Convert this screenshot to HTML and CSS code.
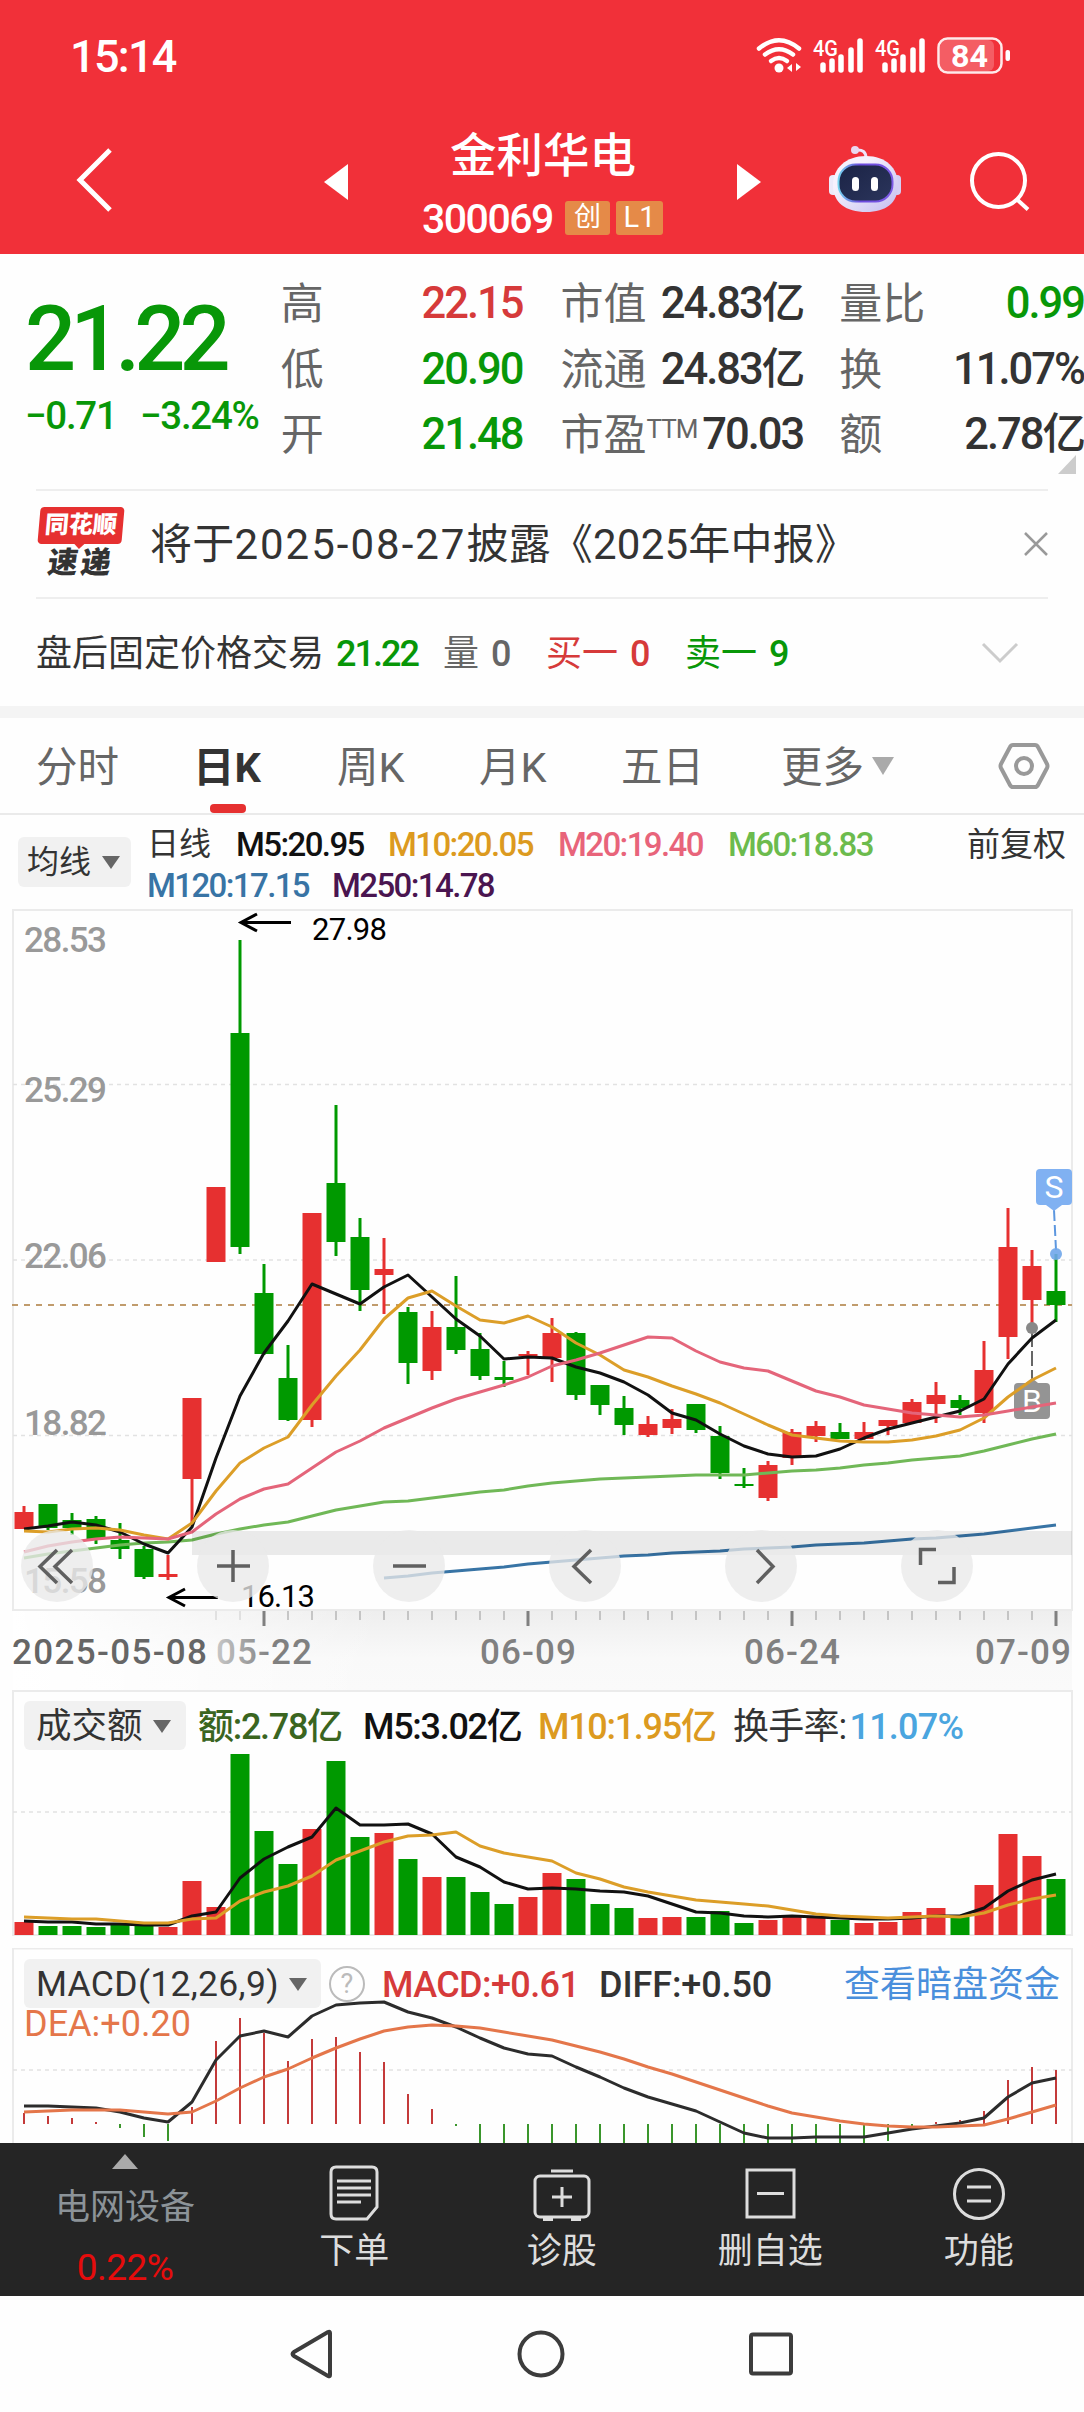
FILE: index.html
```html
<!DOCTYPE html>
<html lang="zh-CN">
<head>
  <meta charset="UTF-8">
  <meta name="viewport" content="width=device-width, initial-scale=1.0">
  <title>金利华电 300069</title>
  <link rel="stylesheet" href="styles.css">
</head>
<body>
  <header>
    <div class="status-bar">
      <span class="clock">15:14</span>
      <svg class="status-icons" width="256" height="40" viewBox="756 36 256 40">
        <g fill="none" stroke="#fff" stroke-width="4.5" stroke-linecap="round">
          <path d="M759 48.500 Q779 32 799 48.500"/>
          <path d="M765 54.500 Q779 44 793 54.500"/>
          <path d="M771 61 Q779 55 787 61"/>
        </g>
        <circle cx="779" cy="68" r="4.5" fill="#fff"/>
        <path d="M787 68l5-4v8zM801 67l-5-4v8z" fill="#fff"/>
        <text class="net" x="813" y="55.500" textLength="25" lengthAdjust="spacingAndGlyphs">4G</text>
        <path d="M823 65v5M832 61v9M841 57v13M851 50v20M860 41v29" stroke="#fff" stroke-width="5.500" stroke-linecap="round"/>
        <text class="net" x="875" y="55.500" textLength="25" lengthAdjust="spacingAndGlyphs">4G</text>
        <path d="M885 65v5M894 61v9M903 57v13M913 50v20M922 41v29" stroke="#fff" stroke-width="5.500" stroke-linecap="round"/>
        <rect x="940" y="40" width="54" height="31" rx="6" fill="#fff" fill-opacity=".22"/>
        <rect x="938.500" y="38.500" width="63" height="34" rx="9" fill="none" stroke="#fff" stroke-width="2.500" stroke-opacity=".9"/>
        <rect x="1005.500" y="50" width="4.500" height="11" rx="2" fill="#fff"/>
        <text class="battery" x="951" y="67" textLength="37" lengthAdjust="spacingAndGlyphs">84</text>
      </svg>
    </div>
    <nav class="top-nav">
      <svg class="back" width="44" height="72" viewBox="0 0 44 72"><path d="M36 6 L6 36 L36 66" fill="none" stroke="#fff" stroke-width="5"/></svg>
      <svg class="prev" width="24" height="36" viewBox="0 0 24 36"><path d="M24 0v36L0 18z" fill="#fff"/></svg>
      <div class="stock">
        <h1>金利华电</h1>
        <p><span class="code">300069</span><em>创</em><em class="level">L1</em></p>
      </div>
      <svg class="next" width="24" height="36" viewBox="0 0 24 36"><path d="M0 0v36L24 18z" fill="#fff"/></svg>
      <svg class="robot" width="74" height="70" viewBox="828 144 74 70">
        <defs>
          <linearGradient id="shell" x1="0" y1="0" x2="1" y2="1"><stop offset=".3" stop-color="#f6f1fd"/><stop offset="1" stop-color="#c3bdf0"/></linearGradient>
          <linearGradient id="face" x1="0" y1="0" x2="1" y2="1"><stop offset="0" stop-color="#1b2345"/><stop offset="1" stop-color="#2b355c"/></linearGradient>
          <linearGradient id="rim"><stop offset="0" stop-color="#74d3ee"/><stop offset=".4" stop-color="#6a48dc"/><stop offset="1" stop-color="#7d5be6"/></linearGradient>
        </defs>
        <path d="M866 158Q866 149 856 150" fill="none" stroke="#eee4fa" stroke-width="3"/>
        <circle cx="855" cy="150" r="4" fill="#ead8f0"/>
        <rect x="829" y="175" width="9" height="20" rx="4" fill="#eceafa"/>
        <rect x="892" y="175" width="9" height="20" rx="4" fill="#d4cff5"/>
        <path d="M866 156C886 156 898 168 898 185C898 203 886 212 866 212C846 212 833 203 833 185C833 168 846 156 866 156z" fill="url(#shell)"/>
        <rect x="838.500" y="164.500" width="54" height="37" rx="17" fill="url(#face)" stroke="url(#rim)" stroke-width="2"/>
        <rect x="852" y="177" width="7" height="14" rx="3.500" fill="#fff"/>
        <rect x="871" y="177" width="7" height="14" rx="3.500" fill="#fff"/>
      </svg>
      <svg class="search" width="64" height="64" viewBox="968 149 64 64"><g fill="none" stroke="#fff" stroke-width="4"><circle cx="998.500" cy="180.500" r="26.500"/><path d="M1017 199.500l11 10"/></g></svg>
    </nav>
  </header>

  <section class="quote">
    <div class="price">
      <strong>21.22</strong>
      <p><span>−0.71</span><span>−3.24%</span></p>
    </div>
    <dl class="col-a">
      <dt>高</dt><dd class="up">22.15</dd>
      <dt>低</dt><dd class="down">20.90</dd>
      <dt>开</dt><dd class="down">21.48</dd>
    </dl>
    <dl class="col-b">
      <dt>市值</dt><dd>24.83亿</dd>
      <dt>流通</dt><dd>24.83亿</dd>
      <dt>市盈<sup>TTM</sup></dt><dd>70.03</dd>
    </dl>
    <dl class="col-c">
      <dt>量比</dt><dd class="down">0.99</dd>
      <dt>换</dt><dd>11.07%</dd>
      <dt>额</dt><dd>2.78亿</dd>
    </dl>
    <i class="corner"></i>
  </section>

  <section class="notice">
    <div class="brand"><b>同花顺</b><i>速递</i></div>
    <p>将于<span>2025-08-27</span>披露《2025年中报》</p>
    <svg width="26" height="26" viewBox="0 0 26 26"><path d="M2 2l22 22M24 2L2 24" stroke="#999" stroke-width="2.500"/></svg>
  </section>

  <section class="after-hours">
    <span class="ah-title">盘后固定价格交易</span>
    <span class="ah-price down">21.22</span>
    <span class="ah-vol">量 <b>0</b></span>
    <span class="ah-buy up">买一 <b>0</b></span>
    <span class="ah-sell down">卖一 <b>9</b></span>
    <svg width="38" height="22" viewBox="0 0 38 22"><path d="M2 2l17 17L36 2" fill="none" stroke="#ccc" stroke-width="3"/></svg>
  </section>

  <nav class="tabs">
    <a>分时</a>
    <a class="active">日K</a>
    <a>周K</a>
    <a>月K</a>
    <a>五日</a>
    <a class="more">更多<i class="caret"></i></a>
    <svg width="52" height="50" viewBox="0 0 52 50"><g fill="none" stroke="#999" stroke-width="4"><path d="M15 4h22q2 0 3 2l9 17q1 2 0 4l-9 17q-1 2-3 2H15q-2 0-3-2L3 27q-1-2 0-4l9-17q1-2 3-2z"/><circle cx="26" cy="25" r="8"/></g></svg>
  </nav>

  <section class="averages">
    <button>均线<i class="caret"></i></button>
    <div class="ma-list">
      <span class="day">日线</span>
      <span class="ma5">M5:20.95</span>
      <span class="ma10">M10:20.05</span>
      <span class="ma20">M20:19.40</span>
      <span class="ma60">M60:18.83</span>
      <span class="ma120">M120:17.15</span>
      <span class="ma250">M250:14.78</span>
    </div>
    <span class="adjust">前复权</span>
  </section>

  <section class="kline">
    <svg width="1084" height="782" viewBox="0 908 1084 782">
      <defs>
        <linearGradient id="axisV" x1="0" y1="0" x2="0" y2="1"><stop offset="0" stop-color="#eee"/><stop offset=".6" stop-color="#f9f9f9"/><stop offset="1" stop-color="#fafafa"/></linearGradient>
        <linearGradient id="axisH"><stop offset="0" stop-color="#fff"/><stop offset=".35" stop-color="#fff" stop-opacity="0"/></linearGradient>
        <linearGradient id="fade" gradientUnits="userSpaceOnUse" x1="212" y1="0" x2="272" y2="0"><stop offset="0" stop-color="#ccc"/><stop offset="1" stop-color="#808080"/></linearGradient>
      </defs>
      <rect x="13" y="1611" width="1059" height="79" fill="url(#axisV)"/>
      <rect x="13" y="1611" width="1059" height="79" fill="url(#axisH)"/>
      <path class="frame" d="M13 1610V910H1072V1610z"/>
      <g class="grid"><path d="M13 1084.500H1072M13 1260H1072M13 1435.500H1072"/></g>
      <path d="M12 1305H1072" stroke="#c09b6c" stroke-width="1.800" stroke-dasharray="6 6"/>
      <g class="scale">
        <text x="24" y="952" textLength="83">28.53</text>
        <text x="24" y="1102" textLength="83">25.29</text>
        <text x="24" y="1268" textLength="83">22.06</text>
        <text x="24" y="1435" textLength="83">18.82</text>
        <text x="24" y="1593" textLength="83">15.58</text>
      </g>
      <g id="candles"></g>
      <g class="trade">
        <path d="M1054 1210l2 40" stroke="#5d97df" stroke-width="2" stroke-dasharray="11 4"/>
        <circle cx="1056" cy="1254" r="6" fill="#6fa6ea" fill-opacity=".9"/>
        <path d="M1032 1332v48" stroke="#666" stroke-width="2" stroke-dasharray="15 4"/>
        <circle cx="1032" cy="1328" r="6" fill="#888"/>
        <rect x="1036" y="1169" width="36" height="36" rx="4" fill="#80b1f2"/>
        <path d="M1046 1205h16l-8 6z" fill="#80b1f2"/>
        <text x="1054" y="1198">S</text>
        <rect x="1014" y="1383" width="36" height="36" rx="4" fill="#949494"/>
        <path d="M1026 1383h12l-6-5z" fill="#949494"/>
        <text x="1032" y="1412">B</text>
      </g>
      <g id="ma"></g>
      <g class="mark">
        <path d="M291 922.500H241M257 914L241 922.500L257 931M218 1597.500H169M185 1589L169 1597.500L185 1606"/>
        <text x="312" y="940" textLength="75">27.98</text>
        <text x="241" y="1607" textLength="74">16.13</text>
      </g>
      <rect x="192" y="1531" width="880" height="24" fill="#000" fill-opacity=".08"/>
      <g id="ticks"></g>
      <g class="dates">
        <text x="12" y="1664" textLength="195" class="first">2025-05-08</text>
        <text x="216" y="1664" textLength="96" class="second">05-22</text>
        <text x="480" y="1664" textLength="96">06-09</text>
        <text x="744" y="1664" textLength="96">06-24</text>
        <text x="975" y="1664" textLength="96">07-09</text>
      </g>
      <g class="tools">
        <circle cx="57" cy="1566" r="36"/><circle cx="233" cy="1566" r="36"/><circle cx="409" cy="1566" r="36"/>
        <circle cx="585" cy="1566" r="36"/><circle cx="761" cy="1566" r="36"/><circle cx="937" cy="1566" r="36"/>
        <path d="M57 1550L40 1566.500L57 1583M72 1550L55 1566.500L72 1583"/>
        <path d="M233 1550V1582M217 1566H250M393 1566H426"/>
        <path d="M591 1550L574 1566.500L591 1583M757 1550L773 1566.500L757 1583"/>
        <path d="M936 1549.500H920.500V1565M954 1567V1582.500H938"/>
      </g>
    </svg>
  </section>

  <section class="panel turnover">
    <div class="legend">
      <button>成交额<i class="caret"></i></button>
      <span class="amount">额:2.78亿</span>
      <span class="v5">M5:3.02亿</span>
      <span class="v10">M10:1.95亿</span>
      <span class="rate">换手率:<b>11.07%</b></span>
    </div>
    <svg width="1084" height="258" viewBox="0 1690 1084 258">
      <path class="frame" d="M13 1935V1691H1072V1935z"/>
      <g class="grid"><path d="M13 1812H1072"/></g>
      <g id="volume"></g>
    </svg>
  </section>

  <section class="panel macd">
    <div class="legend">
      <button>MACD(12,26,9)<i class="caret"></i></button>
      <i class="help">?</i>
      <span class="macd-val">MACD:+0.61</span>
      <span class="diff">DIFF:+0.50</span>
      <a>查看暗盘资金</a>
    </div>
    <span class="dea">DEA:+0.20</span>
    <svg width="1084" height="195" viewBox="0 1948 1084 195">
      <path class="frame" d="M13 2150V1948.500H1072V2150"/>
      <g class="grid"><path d="M13 2070H1072"/></g>
      <g id="macd"></g>
    </svg>
  </section>

  <footer>
    <div class="sector"><i class="tri"></i><span>电网设备</span><b>0.22%</b></div>
    <div class="item">
      <svg width="60" height="60" viewBox="0 0 60 60"><g fill="none" stroke="#ddd" stroke-width="3"><path d="M12 4h36q5 0 5 5v35L43 56H12q-5 0-5-5V9q0-5 5-5z"/><path d="M13 18h34M13 25h34M13 32h34M13 39h24"/></g></svg>
      <span>下单</span>
    </div>
    <div class="item">
      <svg width="60" height="60" viewBox="0 0 60 60"><g fill="none" stroke="#ddd" stroke-width="3"><rect x="3" y="13" width="54" height="41" rx="5"/><path d="M19 8h22M30 24v20M20 34h20"/><path d="M11 56h10M39 56h10" stroke-width="4"/></g></svg>
      <span>诊股</span>
    </div>
    <div class="item">
      <svg width="60" height="60" viewBox="0 0 60 60"><g fill="none" stroke="#ddd" stroke-width="3"><rect x="7" y="7" width="47" height="47"/><path d="M17 30.500h27"/></g></svg>
      <span>删自选</span>
    </div>
    <div class="item">
      <svg width="60" height="60" viewBox="0 0 60 60"><g fill="none" stroke="#ddd" stroke-width="3"><circle cx="30" cy="31" r="24.500"/><path d="M18 24h24M18 38h24"/></g></svg>
      <span>功能</span>
    </div>
  </footer>

  <div class="system-nav">
    <svg width="48" height="52" viewBox="0 0 48 52"><path d="M41 5v42q0 2-2 1L5 28q-3-2 0-4L39 4q2-1 2 1z" fill="none" stroke="#3c3c3c" stroke-width="4"/></svg>
    <svg width="52" height="52" viewBox="0 0 52 52"><circle cx="26" cy="26" r="21.500" fill="none" stroke="#3c3c3c" stroke-width="4"/></svg>
    <svg width="52" height="52" viewBox="0 0 52 52"><rect x="6" y="6.500" width="40" height="39" rx="2" fill="none" stroke="#3c3c3c" stroke-width="4"/></svg>
  </div>

  <script src="chart.js"></script>
</body>
</html>
```

FILE: styles.css
```css
body {
  font-family: Roboto, 'Noto Sans CJK SC', sans-serif;
  margin: 0;
  padding: 0;
  width: 1084px;
  height: 2412px;
  background: #fefefe;
  color: #333;
  overflow: hidden;
}

h1, p, dl, dd {
  margin: 0;
}

i, em {
  font-style: normal;
}

svg {
  display: block;
  flex: none;
}

span, a, p, button {
  white-space: nowrap;
}

.up {
  color: #d63a3a;
}

.down {
  color: #089708;
}

.caret {
  display: inline-block;
  border: 9px solid transparent;
  border-top: 13px solid #666;
  border-bottom: 0;
}

/* header */
header {
  height: 254px;
  background: #f13039;
  color: #fff;
}

.status-bar {
  display: flex;
  justify-content: space-between;
  height: 114px;
  padding: 0 72px 0 70px;
  align-items: center;
}

.clock {
  font-size: 45px;
  font-weight: 500;
  line-height: 116px;
  letter-spacing: -1.7px;
}

.status-icons {
  margin-top: -2px;
}

.status-icons text {
  fill: #fff;
  font-weight: 500;
}

.status-icons .net {
  font-size: 22px;
}

.status-icons .battery {
  font-size: 32px;
  font-weight: 700;
}

.top-nav {
  display: flex;
  height: 140px;
}

.back {
  margin: 30px 0 0 74px;
}

.prev {
  margin: 50px 0 0 206px;
}

.stock {
  width: 390px;
  text-align: center;
}

.stock h1 {
  font-size: 46.5px;
  font-weight: 500;
  line-height: 60px;
  margin-top: 12px;
}

.stock p {
  display: flex;
  height: 60px;
  padding: 0 0 0 74px;
  align-items: center;
  margin-top: 2px;
}

.code {
  width: 143px;
  text-align: left;
  font-size: 41px;
  font-weight: 500;
  letter-spacing: -1.5px;
  margin-top: 2px;
}

.stock em {
  width: 45px;
  height: 34px;
  line-height: 33px;
  margin-right: 6px;
  border-radius: 3px;
  background: #e58a48;
  font-size: 27px;
}

.stock .level {
  width: 47px;
  font-size: 29px;
}

.next {
  margin: 50px 0 0 -1px;
}

.robot {
  margin: 30px 0 0 67px;
}

.search {
  margin: 35px 0 0 66px;
}

/* quote */
.quote {
  display: flex;
  position: relative;
  height: 235px;
}

.price {
  width: 281px;
  padding-left: 25px;
  box-sizing: border-box;
  color: #089708;
}

.price strong {
  display: block;
  margin-top: 33px;
  font-size: 90px;
  font-weight: 500;
  line-height: 106px;
  letter-spacing: -6px;
}

.price p {
  display: flex;
  font-size: 38.5px;
  font-weight: 500;
  line-height: 46px;
  letter-spacing: -1.3px;
}

.price p span:first-child {
  width: 115px;
}

.quote dl {
  display: grid;
  grid-template-columns: 86px 1fr;
  grid-auto-rows: 65.5px;
  padding-top: 17px;
  height: 197px;
  line-height: 66px;
  font-size: 43px;
}

.quote dt {
  color: #666;
  white-space: nowrap;
}

.quote dd {
  text-align: right;
  font-size: 43.5px;
  font-weight: 500;
  letter-spacing: -2px;
  white-space: nowrap;
}

.col-a {
  width: 242px;
}

.col-b {
  width: 243px;
  margin-left: 38px;
}

.col-c {
  width: 245px;
  margin-left: 36px;
}

.quote sup {
  font-size: 26px;
  line-height: 0;
  vertical-align: 12px;
  letter-spacing: -1px;
}

.corner {
  position: absolute;
  right: 8px;
  bottom: 15px;
  border-left: 18px solid transparent;
  border-bottom: 19px solid #ccc;
}

/* notice */
.notice {
  display: flex;
  align-items: center;
  height: 106px;
  margin: 0 36px;
  border-top: 2px solid #eee;
  border-bottom: 2px solid #eee;
}

.brand {
  width: 114px;
  text-align: center;
}

.brand b {
  display: block;
  position: relative;
  width: 84px;
  height: 37px;
  line-height: 37px;
  font-size: 24px;
  font-weight: 900;
  color: #fff;
  background: #e63030;
  border-radius: 4px;
  transform: skewX(-5deg);
  margin-left: 3px;
}

.brand b::after {
  content: '';
  position: absolute;
  left: 36px;
  top: 36px;
  border: 6px solid transparent;
  border-top-color: #e63030;
}

.brand i {
  display: block;
  width: 84px;
  margin-left: 3px;
  font-size: 30px;
  font-weight: 900;
  line-height: 38px;
  letter-spacing: 3px;
  transform: skewX(-8deg);
}

.notice p {
  flex: 1;
  font-size: 42px;
  line-height: 60px;
  letter-spacing: 0.2px;
  margin-top: 2px;
}

.notice p span {
  letter-spacing: 2px;
}

.notice svg {
  margin-right: -1px;
}

/* after-hours row */
.after-hours {
  display: flex;
  align-items: center;
  height: 107px;
  padding-left: 36px;
  border-bottom: 12px solid #f4f4f4;
  font-size: 36px;
}

.after-hours span {
  line-height: 56px;
  margin-top: 2px;
}

.after-hours b {
  font-weight: 500;
  margin-left: 3px;
}

.ah-title {
  width: 300px;
}

.ah-price {
  width: 107px;
  font-weight: 500;
  letter-spacing: -2px;
}

.ah-vol {
  width: 103px;
  color: #666;
}

.ah-buy {
  width: 139px;
}

.ah-sell {
  width: 296px;
}

/* tabs */
.tabs {
  display: flex;
  height: 95px;
  padding-left: 36px;
  border-bottom: 2px solid #eaeaea;
  font-size: 41.5px;
  line-height: 99px;
  color: #666;
}

.tabs a {
  width: 142px;
  height: 95px;
}

.tabs a:first-child {
  width: 157px;
}

.tabs .active {
  position: relative;
  width: 144px;
  font-weight: 700;
  color: #333;
}

.tabs .active::after {
  content: '';
  position: absolute;
  left: 17px;
  bottom: 0;
  width: 36px;
  height: 9px;
  border-radius: 4px;
  background: #e63030;
}

.tabs a:nth-child(5) {
  width: 160px;
}

.tabs .more {
  width: 217px;
}

.more .caret {
  border-width: 18px 11px 0;
  border-top-color: #aaa;
  margin-left: 8px;
  vertical-align: 7px;
}

.tabs svg {
  margin-top: 23px;
}

/* moving averages */
.averages {
  display: flex;
  height: 93px;
}

button {
  border: 0;
  padding: 0;
  border-radius: 6px;
  background: #f1f1f1;
  color: #333;
  font-family: inherit;
  text-align: left;
}

.averages button {
  width: 113px;
  height: 50px;
  margin: 22px 16px 0 18px;
  padding-left: 9px;
  font-size: 32px;
  line-height: 48px;
}

.averages .caret {
  margin-left: 11px;
  vertical-align: 4px;
}

.ma-list {
  display: flex;
  flex-wrap: wrap;
  align-content: flex-start;
  width: 760px;
  padding-top: 9px;
  font-size: 33px;
  font-weight: 500;
  line-height: 41px;
  letter-spacing: -1.6px;
}

.ma-list span {
  width: 170px;
}

.ma-list .day {
  width: 89px;
  font-size: 32px;
  font-weight: 400;
  letter-spacing: 0;
}

.ma-list .ma5 {
  width: 152px;
  color: #111;
}

.ma-list .ma60 {
  width: 178px;
}

.ma-list .ma120 {
  width: 185px;
  color: #3874a5;
}

.ma10 {
  color: #dc9a20;
}

.ma20 {
  color: #e8647a;
}

.ma60 {
  color: #6cbb4d;
}

.ma250 {
  color: #4a1550;
}

.adjust {
  margin: 9px 0 0 60px;
  font-size: 33px;
  line-height: 41px;
}

/* charts */
.frame {
  fill: none;
  stroke: #ebebeb;
  stroke-width: 2;
}

.grid path {
  stroke: #e2e2e2;
  stroke-width: 1.5;
  stroke-dasharray: 4 4;
}

.kline {
  height: 782px;
}

.scale text {
  font-size: 35px;
  font-weight: 500;
  fill: #999;
}

.trade text {
  fill: #fff;
  font-size: 32px;
  text-anchor: middle;
}

.mark path {
  fill: none;
  stroke: #000;
  stroke-width: 3;
}

.mark text {
  font-size: 31px;
  fill: #000;
}

.dates text {
  font-size: 35px;
  font-weight: 500;
  fill: #808080;
}

.dates .first {
  fill: #666;
}

.dates .second {
  fill: url(#fade);
}

.tools circle {
  fill: #e9e9e9;
  fill-opacity: 0.78;
}

.tools path {
  fill: none;
  stroke: #606060;
  stroke-width: 3.5;
}

.panel {
  position: relative;
  height: 258px;
}

.panel > svg {
  position: absolute;
  left: 0;
  top: 0;
}

.legend {
  position: relative;
  z-index: 1;
  display: flex;
  padding: 11px 0 0 24px;
  font-size: 36px;
  font-weight: 500;
  line-height: 52px;
  letter-spacing: -1.3px;
}

.legend button {
  height: 49px;
  padding-left: 12px;
  font-size: 35.5px;
  line-height: 46px;
  letter-spacing: 0;
}

.legend .caret {
  margin-left: 10px;
  vertical-align: 5px;
}

.turnover button {
  width: 162px;
  margin-right: 12px;
}

.amount {
  width: 165px;
  color: #3a651f;
}

.v5 {
  width: 175px;
  color: #111;
}

.v10 {
  width: 195px;
  color: #dc9a20;
}

.rate {
  font-weight: 400;
  letter-spacing: -0.8px;
}

.rate b {
  margin-left: 3px;
  font-weight: 500;
  color: #4aa5df;
}

.macd {
  height: 195px;
  overflow: hidden;
}

.macd button {
  width: 297px;
  letter-spacing: 0.3px;
}

.help {
  width: 32px;
  height: 32px;
  margin: 7px 17px 0 8px;
  border: 2px solid #bbb;
  border-radius: 50%;
  color: #bbb;
  font-size: 27px;
  font-weight: 400;
  line-height: 33px;
  letter-spacing: 0;
  text-align: center;
}

.macd-val {
  width: 217px;
  color: #d63a3a;
  letter-spacing: -0.6px;
}

.diff {
  width: 245px;
  letter-spacing: -0.1px;
}

.legend a {
  color: #4a8fdc;
  font-weight: 400;
  letter-spacing: 0;
}

.dea {
  position: relative;
  display: block;
  margin: -8px 0 0 24px;
  font-size: 36px;
  line-height: 42px;
  color: #e4764a;
}

/* bottom bar */
footer {
  display: flex;
  height: 153px;
  background: #252525;
  color: #ddd;
  font-size: 35px;
}

.sector {
  display: flex;
  flex-direction: column;
  align-items: center;
  width: 250px;
  color: #8c9398;
}

.tri {
  border: 13px solid transparent;
  border-top: 0;
  border-bottom: 15px solid #aaa;
  margin-top: 11px;
}

.sector span {
  line-height: 50px;
  margin-top: 14px;
}

.sector b {
  font-weight: 400;
  color: #e60c0c;
  line-height: 50px;
  margin-top: 10px;
  font-size: 37px;
  letter-spacing: -0.5px;
}

.item {
  display: flex;
  flex-direction: column;
  align-items: center;
  width: 208.5px;
}

.item svg {
  margin-top: 20px;
}

.item span {
  line-height: 50px;
  margin-top: 4px;
}

.item:nth-child(n+3) {
  position: relative;
  left: -1px;
}

.system-nav {
  display: flex;
  justify-content: center;
  padding: 32px 0 0 2px;
  height: 84px;
  gap: 178px;
}
```

FILE: chart.js
```js
const RED = '#e63030';
const GREEN = '#009900';
const STEP = 24;
const X0 = 24;

// [color, high, body top, body bottom, low]
const candles = [
  ['r', 1506, 1512, 1529, 1529], ['g', 1504, 1504, 1528, 1530], ['g', 1513, 1520, 1528, 1535],
  ['g', 1516, 1519, 1539, 1544], ['g', 1523, 1540, 1549, 1559], ['g', 1546, 1549, 1577, 1579],
  ['r', 1555, 1574, 1577, 1580], ['r', 1398, 1398, 1479, 1525], ['r', 1187, 1187, 1262, 1262],
  ['g', 940, 1033, 1247, 1254], ['g', 1264, 1293, 1354, 1355], ['g', 1345, 1378, 1420, 1421],
  ['r', 1213, 1213, 1420, 1427], ['g', 1105, 1183, 1242, 1256], ['g', 1218, 1237, 1290, 1311],
  ['r', 1238, 1269, 1275, 1314], ['g', 1307, 1312, 1363, 1384], ['r', 1311, 1327, 1371, 1380],
  ['g', 1276, 1327, 1350, 1354], ['g', 1333, 1349, 1376, 1380], ['g', 1361, 1377, 1380, 1387],
  ['r', 1351, 1354, 1356, 1375], ['r', 1318, 1333, 1358, 1382], ['g', 1332, 1333, 1395, 1400],
  ['g', 1385, 1385, 1405, 1415], ['g', 1396, 1408, 1425, 1435], ['r', 1416, 1424, 1435, 1437],
  ['r', 1409, 1419, 1428, 1434], ['g', 1404, 1404, 1430, 1433], ['g', 1426, 1436, 1473, 1479],
  ['g', 1468, 1484, 1486, 1488], ['r', 1461, 1465, 1498, 1501], ['r', 1429, 1432, 1458, 1465],
  ['r', 1421, 1426, 1436, 1442], ['g', 1423, 1432, 1439, 1439], ['r', 1422, 1432, 1439, 1440],
  ['r', 1420, 1420, 1426, 1435], ['r', 1399, 1402, 1423, 1423], ['r', 1382, 1395, 1404, 1423],
  ['g', 1395, 1400, 1408, 1415], ['r', 1341, 1370, 1413, 1423], ['r', 1208, 1247, 1337, 1359],
  ['r', 1250, 1266, 1300, 1330], ['g', 1254, 1291, 1305, 1322]
];

const ma5 = [1529, 1526, 1522, 1525, 1532, 1544, 1553, 1527, 1458, 1396, 1353, 1321, 1284, 1294, 1304, 1287, 1275, 1297, 1319, 1336, 1359, 1357, 1358, 1367, 1373, 1382, 1395, 1413, 1420, 1434, 1446, 1454, 1457, 1456, 1449, 1438, 1429, 1423, 1417, 1411, 1399, 1364, 1338, 1320];
const ma10 = [1531, 1532, 1529, 1528, 1530, 1535, 1539, 1523, 1491, 1463, 1448, 1437, 1405, 1376, 1350, 1319, 1298, 1291, 1306, 1320, 1323, 1316, 1327, 1343, 1355, 1370, 1377, 1386, 1394, 1403, 1414, 1425, 1435, 1438, 1441, 1442, 1442, 1440, 1436, 1430, 1418, 1397, 1380, 1368];
const ma20 = [1552, 1546, 1542, 1539, 1537, 1538, 1539, 1532, 1514, 1499, 1489, 1484, 1468, 1452, 1441, 1428, 1418, 1408, 1399, 1392, 1385, 1377, 1366, 1360, 1353, 1345, 1337, 1338, 1351, 1362, 1368, 1371, 1381, 1391, 1397, 1405, 1409, 1413, 1415, 1417, 1415, 1411, 1407, 1403];
const ma60 = [1558, 1554, 1551, 1548, 1545, 1543, 1542, 1540, 1534, 1529, 1525, 1522, 1516, 1510, 1506, 1502, 1501, 1498, 1495, 1492, 1490, 1486, 1483, 1481, 1479, 1478, 1477, 1476, 1475, 1475, 1475, 1473, 1471, 1470, 1468, 1465, 1463, 1460, 1458, 1456, 1451, 1445, 1439, 1434];
const ma120 = [1578, 1576, 1573, 1571, 1569, 1567, 1564, 1562, 1560, 1558, 1556, 1555, 1553, 1552, 1551, 1549, 1548, 1547, 1545, 1544, 1543, 1541, 1539, 1538, 1536, 1534, 1531, 1528, 1525];

const volume = [1922, 1926, 1926, 1927, 1925, 1926, 1927, 1881, 1907, 1754, 1831, 1864, 1829, 1761, 1837, 1833, 1859, 1877, 1877, 1892, 1904, 1897, 1873, 1879, 1904, 1908, 1918, 1917, 1917, 1911, 1923, 1920, 1917, 1917, 1920, 1923, 1922, 1912, 1908, 1917, 1885, 1834, 1856, 1879];
const vol5 = [1921, 1922, 1922, 1924, 1924, 1925, 1925, 1916, 1912, 1878, 1859, 1847, 1837, 1808, 1825, 1825, 1824, 1834, 1857, 1867, 1882, 1889, 1888, 1889, 1891, 1892, 1896, 1904, 1912, 1913, 1916, 1917, 1916, 1917, 1918, 1919, 1919, 1918, 1916, 1916, 1908, 1891, 1880, 1874];
const vol10 = [1917, 1918, 1919, 1919, 1921, 1923, 1923, 1919, 1918, 1901, 1892, 1886, 1876, 1860, 1851, 1842, 1836, 1835, 1832, 1846, 1853, 1857, 1861, 1873, 1879, 1887, 1892, 1896, 1900, 1902, 1904, 1906, 1910, 1914, 1916, 1917, 1918, 1917, 1916, 1917, 1913, 1905, 1899, 1895];

const hist = [2113, 2116, 2118, 2122, 2128, 2137, 2141, 2107, 2041, 2018, 2033, 2061, 2039, 2037, 2052, 2062, 2094, 2109, 2126, 2150, 2150, 2150, 2150, 2150, 2150, 2150, 2150, 2150, 2150, 2150, 2150, 2150, 2150, 2150, 2150, 2150, 2141, 2126, 2122, 2120, 2111, 2080, 2067, 2070];
const diff = [2106, 2106, 2107, 2108, 2112, 2118, 2122, 2102, 2060, 2036, 2031, 2037, 2016, 2005, 2003, 2002, 2012, 2018, 2027, 2038, 2048, 2054, 2056, 2067, 2077, 2088, 2097, 2104, 2111, 2122, 2133, 2138, 2138, 2137, 2137, 2137, 2133, 2129, 2126, 2123, 2118, 2097, 2083, 2078];
const dea = [2112, 2111, 2110, 2110, 2110, 2112, 2114, 2112, 2101, 2088, 2077, 2069, 2058, 2048, 2039, 2031, 2027, 2025, 2026, 2028, 2032, 2036, 2040, 2046, 2052, 2059, 2067, 2074, 2082, 2090, 2098, 2106, 2113, 2117, 2121, 2124, 2126, 2127, 2127, 2126, 2125, 2119, 2112, 2105];

function xAt(i) {
  return X0 + i * STEP;
}

function rect(x, y, w, h, color) {
  return `<rect x="${x}" y="${y}" width="${w}" height="${h}" fill="${color}"/>`;
}

function line(data, color, start = 0) {
  const points = data.map((y, i) => xAt(i + start) + ',' + y).join(' ');
  return `<polyline points="${points}" fill="none" stroke="${color}" stroke-width="3" stroke-linejoin="round"/>`;
}

function draw(id, markup) {
  document.getElementById(id).innerHTML = markup;
}

draw('candles', candles.map(([c, high, top, bottom, low], i) => {
  const color = c === 'r' ? RED : GREEN;
  return rect(xAt(i) - 1.5, high, 3, low - high, color) + rect(xAt(i) - 9.5, top, 19, bottom - top, color);
}).join(''));

draw('ma', line(ma120, '#3874a5', 15) + line(ma60, '#70b857') + line(ma5, '#111') + line(ma10, '#dc9e28') + line(ma20, '#e4657a'));

// Bars share the candle colors
draw('volume', volume.map((top, i) =>
  rect(xAt(i) - 9.5, top, 19, 1935 - top, candles[i][0] === 'r' ? RED : GREEN)
).join('') + line(vol5, '#111') + line(vol10, '#dc9e28'));

draw('macd', hist.map((y, i) =>
  y < 2124 ? rect(xAt(i) - 1, y, 2, 2124 - y, '#c43a3a') : rect(xAt(i) - 1, 2124, 2, y - 2124, '#3a962c')
).join('') + line(diff, '#2c2c2c') + line(dea, '#e4764a'));

let ticks = '';
for (let x = 216; x <= 1056; x += STEP) {
  const major = (x - 264) % 264 === 0;
  ticks += major ? rect(x - 1.5, 1611, 3, 15, '#808080') : rect(x - 0.5, 1611, 1, 9, x < 250 ? '#ccc' : '#999');
}
draw('ticks', ticks);
```
